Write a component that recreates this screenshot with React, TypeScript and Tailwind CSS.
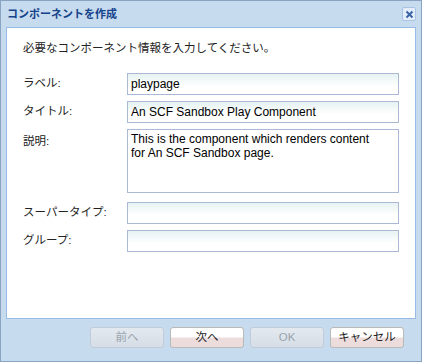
import React from "react";

const jp = '"Liberation Sans", "Noto Sans CJK JP", sans-serif';

function Field({ label, value }: { label: string; value?: string }) {
  return (
    <div className="flex items-center h-[22px]">
      <div className="w-[104px] text-[11.5px] text-[#222]">{label}</div>
      <div className="w-[272px] h-[22px] border border-[#abb8d6] bg-gradient-to-b from-[#e6f2f2] to-white to-60% px-[3px] flex items-center text-[12px] text-black">
        {value}
      </div>
    </div>
  );
}

function Btn({ text, disabled }: { text: string; disabled?: boolean }) {
  return (
    <button
      className={`w-[74px] h-[21px] rounded-[3px] border text-[11.5px] leading-none ${
        disabled
          ? "border-[#c2ccd8] bg-gradient-to-b from-[#e3e9ef] to-[#d5dde6] text-[#9aa3ad]"
          : "border-[#b9b9b9] bg-gradient-to-b from-white from-45% to-[#ecdcdc] to-55% text-[#222]"
      }`}
    >
      {text}
    </button>
  );
}

export default function App() {
  return (
    <div className="w-[422px] h-[364px] bg-white" style={{ fontFamily: jp }}>
      <div className="w-[422px] h-[362px] border border-[#8aa3c2] bg-[#c7dbee] flex flex-col">
        {/* タイトルバー */}
        <div className="h-[26px] flex items-center justify-between pl-[6px] pr-[5px]">
          <span className="text-[11px] font-bold text-[#15428b]">コンポーネントを作成</span>
          <div className="w-[14px] h-[14px] border border-[#a9c3e3] bg-[#e4eefa] rounded-[2px] flex items-center justify-center">
            <svg width="9" height="9" viewBox="0 0 9 9">
              <path d="M1.5 1.5L7.5 7.5M7.5 1.5L1.5 7.5" stroke="#3a63a5" strokeWidth="2" />
            </svg>
          </div>
        </div>

        {/* 本体 */}
        <div className="mx-[5px] h-[292px] border border-[#99bbe8] bg-white pl-[16px] pt-[12px]">
          <p className="text-[11.5px] text-[#222] h-[16px] leading-[16px]">
            必要なコンポーネント情報を入力してください。
          </p>
          <div className="mt-[17px] flex flex-col gap-[6px]">
            <Field label="ラベル:" value="playpage" />
            <Field label="タイトル:" value="An SCF Sandbox Play Component" />
            <div className="flex">
              <div className="w-[104px] text-[11.5px] text-[#222] pt-[4px]">説明:</div>
              <div className="w-[272px] h-[64px] border border-[#abb8d6] bg-white pl-[3px] pr-[16px] pt-[2px] text-[12px] leading-[14px] text-black">
                This is the component which renders content for An SCF Sandbox page.
              </div>
            </div>
            <div className="mt-[3px] flex flex-col gap-[6px]">
              <Field label="スーパータイプ:" />
              <Field label="グループ:" />
            </div>
          </div>
        </div>

        {/* フッター */}
        <div className="flex-1 flex items-start justify-end gap-[6px] pt-[8px] pr-[17px]">
          <Btn text="前へ" disabled />
          <Btn text="次へ" />
          <Btn text="OK" disabled />
          <Btn text="キャンセル" />
        </div>
      </div>
    </div>
  );
}
